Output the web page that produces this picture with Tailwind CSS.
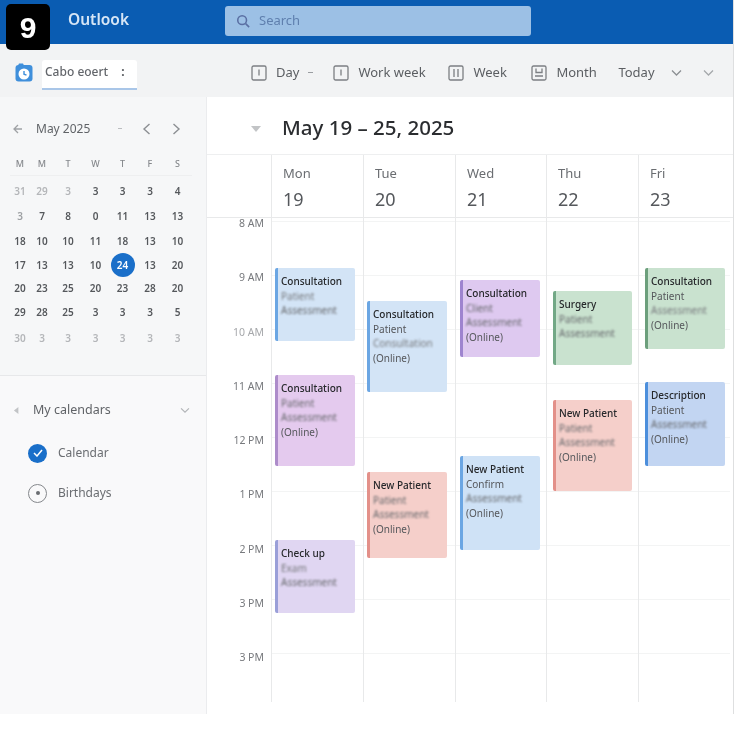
<!DOCTYPE html>
<html lang="en">
<head>
  <meta charset="UTF-8">
  <meta name="viewport" content="width=device-width, initial-scale=1.0">
  <title>Outlook - Calendar</title>
  <script src="https://cdn.jsdelivr.net/npm/@tailwindcss/browser@4"></script>
</head>
<body class="bg-white font-['Noto_Sans',sans-serif]">
  <div class="relative w-[737px] h-[752px] overflow-hidden bg-white blur-[0.7px]">
    <div class="absolute left-[6px] top-[4px] w-[44px] h-[46px] z-10 rounded-[5px] bg-black text-white flex items-center justify-center text-[30px] font-bold font-['Liberation_Sans',sans-serif]">9</div>

    <div class="w-[734px] h-[714px] flex flex-col border-r border-[#dedfe0]">
      <!-- top bar -->
      <header class="h-[44px] shrink-0 bg-[#0a5cb2] flex items-center pb-[2px]">
        <span class="ml-[68px] w-[157px] pb-[2px] text-[15.5px] font-semibold text-[#d7e6f6]">Outlook</span>
        <div class="w-[306px] h-[30px] rounded-[3px] bg-[#9cc0e5] flex items-center pl-[11px] gap-[9px] text-[13px] text-[#5f7fae]">
          <svg class="w-[14px] h-[14px]" viewBox="0 0 16 16" fill="none" stroke="#5a6fa3" stroke-width="1.8"><circle cx="7" cy="7" r="5"/><path d="M11 11l4 4"/></svg>
          <span>Search</span>
        </div>
      </header>

      <!-- toolbar -->
      <div class="h-[53px] shrink-0 bg-[#f2f3f4] flex items-center pt-[4px] text-[13px] text-[#5b5e62]">
        <svg class="ml-[15px] w-[18px] h-[19px]" viewBox="0 0 18 19"><rect x="0.5" y="2" width="17" height="16.5" rx="3" fill="#3f8fdb"/><circle cx="9" cy="11" r="5.5" fill="#fff"/><path d="M9 8v3.2l2.5 1" stroke="#3f8fdb" stroke-width="1.4" fill="none"/><path d="M3 2.5l1-2h4l1 2z" fill="#3f8fdb"/></svg>
        <div class="ml-[9px] mt-[5px] w-[95px] h-[30px] bg-white border-b-2 border-[#a9c6e8] rounded-t-[3px] flex items-center pl-[3px] pb-[5px] gap-[13px]">
          <span class="text-[12px] font-medium text-[#63666b]">Cabo eoert</span>
          <span class="text-[12px] font-bold leading-none">:</span>
        </div>
        <svg class="ml-[114px] w-[16px] h-[16px]" viewBox="0 0 16 16" fill="none" stroke="#7c7f83" stroke-width="1.3"><rect x="1" y="1" width="14" height="14" rx="1.5"/><path d="M8 4.5v6"/></svg>
        <span class="ml-[9px]">Day</span>
        <span class="ml-[9px] w-[5px] h-[1.5px] bg-[#9a9da1]"></span>
        <svg class="ml-[20px] w-[16px] h-[16px]" viewBox="0 0 16 16" fill="none" stroke="#7c7f83" stroke-width="1.3"><rect x="1" y="1" width="14" height="14" rx="1.5"/><path d="M8 4.5v6"/></svg>
        <span class="ml-[9px] w-[90px]">Work week</span>
        <svg class="w-[16px] h-[16px]" viewBox="0 0 16 16" fill="none" stroke="#7c7f83" stroke-width="1.3"><rect x="1" y="1" width="14" height="14" rx="1.5"/><path d="M6 4v8M10 4v8"/></svg>
        <span class="ml-[9px] w-[58px]">Week</span>
        <svg class="w-[16px] h-[16px]" viewBox="0 0 16 16" fill="none" stroke="#7c7f83" stroke-width="1.3"><rect x="1" y="1" width="14" height="14" rx="1.5"/><path d="M5 3.5v4h6v-4M4 11h8"/></svg>
        <span class="ml-[9px] w-[62px]">Month</span>
        <span class="w-[53px]">Today</span>
        <svg class="w-[11px] h-[8px]" viewBox="0 0 11 8" fill="none" stroke="#8c8f93" stroke-width="1.3"><path d="M1 1.5l4.5 4.5 4.5-4.5"/></svg>
        <svg class="ml-[21px] w-[11px] h-[8px]" viewBox="0 0 11 8" fill="none" stroke="#a5a8ab" stroke-width="1.3"><path d="M1 1.5l4.5 4.5 4.5-4.5"/></svg>
      </div>

      <div class="flex flex-1 min-h-0">
        <!-- sidebar -->
        <aside class="w-[207px] shrink-0 bg-[#f6f7f8] border-r border-[#ebecee] flex flex-col text-[#55585c]">
          <div class="h-[279px] shrink-0 border-b border-[#e7e8ea]">
            <div class="h-[55px] flex items-center pt-[8px]">
              <svg class="ml-[13px] w-[10px] h-[10px]" viewBox="0 0 10 10" fill="none" stroke="#9fa2a5" stroke-width="1.3"><path d="M5 1L1 5l4 4M1 5h8"/></svg>
              <span class="ml-[13px] text-[12px] text-[#606367]">May 2025</span>
              <span class="ml-[28px] w-[4px] h-[1px] bg-[#bbbdc0]"></span>
              <svg class="ml-[20px] w-[9px] h-[12px]" viewBox="0 0 9 12" fill="none" stroke="#8c8f93" stroke-width="1.4"><path d="M7.5 1L2 6l5.5 5"/></svg>
              <svg class="ml-[21px] w-[9px] h-[12px]" viewBox="0 0 9 12" fill="none" stroke="#8c8f93" stroke-width="1.4"><path d="M1.5 1L7 6l-5.5 5"/></svg>
            </div>
            <div class="ml-[10px] w-[182px] grid grid-cols-[20px_24px_28px_27px_27px_28px_27px] h-[24px] items-center text-center text-[9px] font-medium text-[#85888c] blur-[0.5px] border-b border-[#eeeff0]">
              <span>M</span><span>M</span><span>T</span><span>W</span><span>T</span><span>F</span><span>S</span>
            </div>
            <div class="mt-[3px] ml-[10px] w-[182px] grid grid-cols-[20px_24px_28px_27px_27px_28px_27px] grid-rows-[25px_25px_24px_24px_23px_25px_26px] items-center text-center text-[10px] font-semibold text-[#55585c] blur-[0.6px]">
              <span class="text-[#b4b6b9]">31</span><span class="text-[#b4b6b9]">29</span><span class="text-[#b4b6b9]">3</span><span>3</span><span>3</span><span>3</span><span>4</span>
              <span class="text-[#9da0a3]">3</span><span>7</span><span>8</span><span>0</span><span>11</span><span>13</span><span>13</span>
              <span>18</span><span>10</span><span>10</span><span>11</span><span>18</span><span>13</span><span>10</span>
              <span>17</span><span>13</span><span>13</span><span>10</span>
              <span class="justify-self-center w-[24px] h-[24px] rounded-full bg-[#1a6fc9] text-white flex items-center justify-center">24</span>
              <span>13</span><span>20</span>
              <span>20</span><span>23</span><span>25</span><span>20</span><span>23</span><span>28</span><span>20</span>
              <span>29</span><span>28</span><span>25</span><span>3</span><span>3</span><span>3</span><span>5</span>
              <span class="text-[#b4b6b9]">30</span><span class="text-[#b4b6b9]">3</span><span class="text-[#b4b6b9]">3</span><span class="text-[#b4b6b9]">3</span><span class="text-[#b4b6b9]">3</span><span class="text-[#b4b6b9]">3</span><span class="text-[#b4b6b9]">3</span>
            </div>
          </div>
          <div class="flex-1 bg-[#f9f9fa]">
            <div class="mt-[24px] h-[20px] flex items-center">
              <svg class="ml-[13px] w-[9px] h-[9px]" viewBox="0 0 10 10" fill="#c2c4c6"><path d="M1 5l5-4v8z"/></svg>
              <span class="ml-[11px] text-[12.5px] text-[#606367]">My calendars</span>
              <svg class="ml-[69px] w-[10px] h-[7px]" viewBox="0 0 11 8" fill="none" stroke="#b2b4b7" stroke-width="1.3"><path d="M1 1.5l4.5 4.5 4.5-4.5"/></svg>
            </div>
            <div class="mt-[23px] h-[20px] flex items-center">
              <span class="ml-[28px] w-[19px] h-[19px] rounded-full bg-[#1a6fc9] flex items-center justify-center">
                <svg class="w-[10px] h-[8px]" viewBox="0 0 10 8" fill="none" stroke="#fff" stroke-width="1.5"><path d="M1 4l3 3 5-6"/></svg>
              </span>
              <span class="ml-[11px] text-[12px] text-[#6a6d71]">Calendar</span>
            </div>
            <div class="mt-[20px] h-[20px] flex items-center">
              <span class="ml-[28px] w-[19px] h-[19px] rounded-full border border-[#85888c] flex items-center justify-center">
                <span class="w-[4px] h-[4px] rounded-full bg-[#6a6d71]"></span>
              </span>
              <span class="ml-[11px] text-[12px] text-[#6a6d71]">Birthdays</span>
            </div>
          </div>
        </aside>

        <!-- week view -->
        <main class="flex-1 min-w-0 flex flex-col bg-white">
          <div class="h-[58px] shrink-0 flex items-center pt-[4px] border-b border-[#eeeff0]">
            <svg class="ml-[44px] w-[10px] h-[10px]" viewBox="0 0 10 10" fill="#c2c4c6"><path d="M0 3h10L5 9z"/></svg>
            <h1 class="ml-[21px] text-[20.5px] font-medium text-[#2b2d30]">May 19 – 25, 2025</h1>
          </div>

          <div class="h-[63px] shrink-0 flex border-b border-[#e8e9ea] text-[#6a6d71]">
            <div class="w-[64px] shrink-0"></div>
            <div class="w-[92px] border-l border-[#e8e9ea] pl-[11px] pt-[8px]"><div class="text-[13px] leading-[20px]">Mon</div><div class="mt-[3px] text-[18px] leading-[26px] text-[#55585c]">19</div></div>
            <div class="w-[92px] border-l border-[#e8e9ea] pl-[11px] pt-[8px]"><div class="text-[13px] leading-[20px]">Tue</div><div class="mt-[3px] text-[18px] leading-[26px] text-[#55585c]">20</div></div>
            <div class="w-[91px] border-l border-[#e8e9ea] pl-[11px] pt-[8px]"><div class="text-[13px] leading-[20px]">Wed</div><div class="mt-[3px] text-[18px] leading-[26px] text-[#55585c]">21</div></div>
            <div class="w-[92px] border-l border-[#e8e9ea] pl-[11px] pt-[8px]"><div class="text-[13px] leading-[20px]">Thu</div><div class="mt-[3px] text-[18px] leading-[26px] text-[#55585c]">22</div></div>
            <div class="w-[92px] border-l border-[#e8e9ea] pl-[11px] pt-[8px]"><div class="text-[13px] leading-[20px]">Fri</div><div class="mt-[3px] text-[18px] leading-[26px] text-[#55585c]">23</div></div>
          </div>

          <div class="flex h-[484px]">
            <div class="w-[57px] mr-[7px] pt-[1px] shrink-0 text-right text-[10.5px] leading-[8px] text-[#77797d]">
              <div class="h-[54.25px]">8 AM</div>
              <div class="h-[54.25px]">9 AM</div>
              <div class="h-[54.25px] text-[#a6a8ab]">10 AM</div>
              <div class="h-[54.25px]">11 AM</div>
              <div class="h-[54.25px]">12 PM</div>
              <div class="h-[54.25px]">1 PM</div>
              <div class="h-[54.25px]">2 PM</div>
              <div class="h-[54.25px]">3 PM</div>
              <div class="h-[54.25px]">3 PM</div>
            </div>

            <div class="relative w-[92px] border-l border-[#e8e9ea] bg-[linear-gradient(#f3f4f4_1px,transparent_1px)] bg-[length:100%_54px] bg-[position:0_3px]">
              <div class="absolute left-[3px] top-[50px] w-[80px] h-[73px] rounded-[2px] border-l-[3px] border-[#6ba6e3] bg-[#d3e4f6] pl-[3px] pt-[6px] text-[10px] leading-[14.5px] text-[#26282b]">
                <div class="font-medium">Consultation</div><div class="text-[#77797d] blur-[0.9px]">Patient</div><div class="text-[#66686c] blur-[1.3px]">Assessment</div>
              </div>
              <div class="absolute left-[3px] top-[157px] w-[80px] h-[91px] rounded-[2px] border-l-[3px] border-[#ad8cca] bg-[#e4caee] pl-[3px] pt-[6px] text-[10px] leading-[14.5px] text-[#26282b]">
                <div class="font-medium">Consultation</div><div class="text-[#66686c] blur-[0.9px]">Patient</div><div class="text-[#66686c] blur-[1.3px]">Assessment</div><div class="text-[#55575b] blur-[0.7px]">(Online)</div>
              </div>
              <div class="absolute left-[3px] top-[322px] w-[80px] h-[73px] rounded-[2px] border-l-[3px] border-[#9a9fd8] bg-[#e0d6f2] pl-[3px] pt-[6px] text-[10px] leading-[14.5px] text-[#26282b]">
                <div class="font-medium">Check up</div><div class="text-[#77797d] blur-[0.9px]">Exam</div><div class="text-[#66686c] blur-[1.3px]">Assessment</div>
              </div>
            </div>

            <div class="relative w-[92px] border-l border-[#e8e9ea] bg-[linear-gradient(#f3f4f4_1px,transparent_1px)] bg-[length:100%_54px] bg-[position:0_3px]">
              <div class="absolute left-[3px] top-[83px] w-[80px] h-[91px] rounded-[2px] border-l-[3px] border-[#6ba6e3] bg-[#d3e4f6] pl-[3px] pt-[6px] text-[10px] leading-[14.5px] text-[#26282b]">
                <div class="font-medium">Consultation</div><div class="text-[#55575b] blur-[0.7px]">Patient</div><div class="text-[#77797d] blur-[1.1px]">Consultation</div><div class="text-[#55575b] blur-[0.7px]">(Online)</div>
              </div>
              <div class="absolute left-[3px] top-[254px] w-[80px] h-[86px] rounded-[2px] border-l-[3px] border-[#e39089] bg-[#f5cfca] pl-[3px] pt-[6px] text-[10px] leading-[14.5px] text-[#26282b]">
                <div class="font-medium">New Patient</div><div class="text-[#66686c] blur-[0.9px]">Patient</div><div class="text-[#66686c] blur-[1.3px]">Assessment</div><div class="text-[#55575b] blur-[0.7px]">(Online)</div>
              </div>
            </div>

            <div class="relative w-[91px] border-l border-[#e8e9ea] bg-[linear-gradient(#f3f4f4_1px,transparent_1px)] bg-[length:100%_54px] bg-[position:0_3px]">
              <div class="absolute left-[4px] top-[62px] w-[80px] h-[77px] rounded-[2px] border-l-[3px] border-[#9e84cf] bg-[#dec9f0] pl-[3px] pt-[6px] text-[10px] leading-[14.5px] text-[#26282b]">
                <div class="font-medium">Consultation</div><div class="text-[#66686c] blur-[0.9px]">Client</div><div class="text-[#66686c] blur-[1.3px]">Assessment</div><div class="text-[#55575b] blur-[0.7px]">(Online)</div>
              </div>
              <div class="absolute left-[4px] top-[238px] w-[80px] h-[94px] rounded-[2px] border-l-[3px] border-[#6ba6e3] bg-[#cfe2f6] pl-[3px] pt-[6px] text-[10px] leading-[14.5px] text-[#26282b]">
                <div class="font-medium">New Patient</div><div class="text-[#55575b] blur-[0.7px]">Confirm</div><div class="text-[#66686c] blur-[1.3px]">Assessment</div><div class="text-[#55575b] blur-[0.7px]">(Online)</div>
              </div>
            </div>

            <div class="relative w-[92px] border-l border-[#e8e9ea] bg-[linear-gradient(#f3f4f4_1px,transparent_1px)] bg-[length:100%_54px] bg-[position:0_3px]">
              <div class="absolute left-[6px] top-[73px] w-[79px] h-[74px] rounded-[2px] border-l-[3px] border-[#72a886] bg-[#c9e2cf] pl-[3px] pt-[6px] text-[10px] leading-[14.5px] text-[#26282b]">
                <div class="font-medium">Surgery</div><div class="text-[#66686c] blur-[0.9px]">Patient</div><div class="text-[#66686c] blur-[1.3px]">Assessment</div>
              </div>
              <div class="absolute left-[6px] top-[182px] w-[79px] h-[91px] rounded-[2px] border-l-[3px] border-[#e39089] bg-[#f5cfca] pl-[3px] pt-[6px] text-[10px] leading-[14.5px] text-[#26282b]">
                <div class="font-medium">New Patient</div><div class="text-[#66686c] blur-[0.9px]">Patient</div><div class="text-[#66686c] blur-[1.3px]">Assessment</div><div class="text-[#55575b] blur-[0.7px]">(Online)</div>
              </div>
            </div>

            <div class="relative w-[92px] border-l border-[#e8e9ea] bg-[linear-gradient(#f3f4f4_1px,transparent_1px)] bg-[length:100%_54px] bg-[position:0_3px]">
              <div class="absolute left-[6px] top-[50px] w-[80px] h-[81px] rounded-[2px] border-l-[3px] border-[#6c9f7c] bg-[#c9e2cf] pl-[3px] pt-[6px] text-[10px] leading-[14.5px] text-[#26282b]">
                <div class="font-medium">Consultation</div><div class="text-[#55575b] blur-[0.7px]">Patient</div><div class="text-[#77797d] blur-[1.3px]">Assessment</div><div class="text-[#55575b] blur-[0.7px]">(Online)</div>
              </div>
              <div class="absolute left-[6px] top-[164px] w-[80px] h-[84px] rounded-[2px] border-l-[3px] border-[#4c8fdc] bg-[#c2d5f2] pl-[3px] pt-[6px] text-[10px] leading-[14.5px] text-[#26282b]">
                <div class="font-medium">Description</div><div class="text-[#55575b] blur-[0.7px]">Patient</div><div class="text-[#66686c] blur-[1.3px]">Assessment</div><div class="text-[#55575b] blur-[0.7px]">(Online)</div>
              </div>
            </div>
          </div>
        </main>
      </div>
    </div>
  </div>
</body>
</html>
